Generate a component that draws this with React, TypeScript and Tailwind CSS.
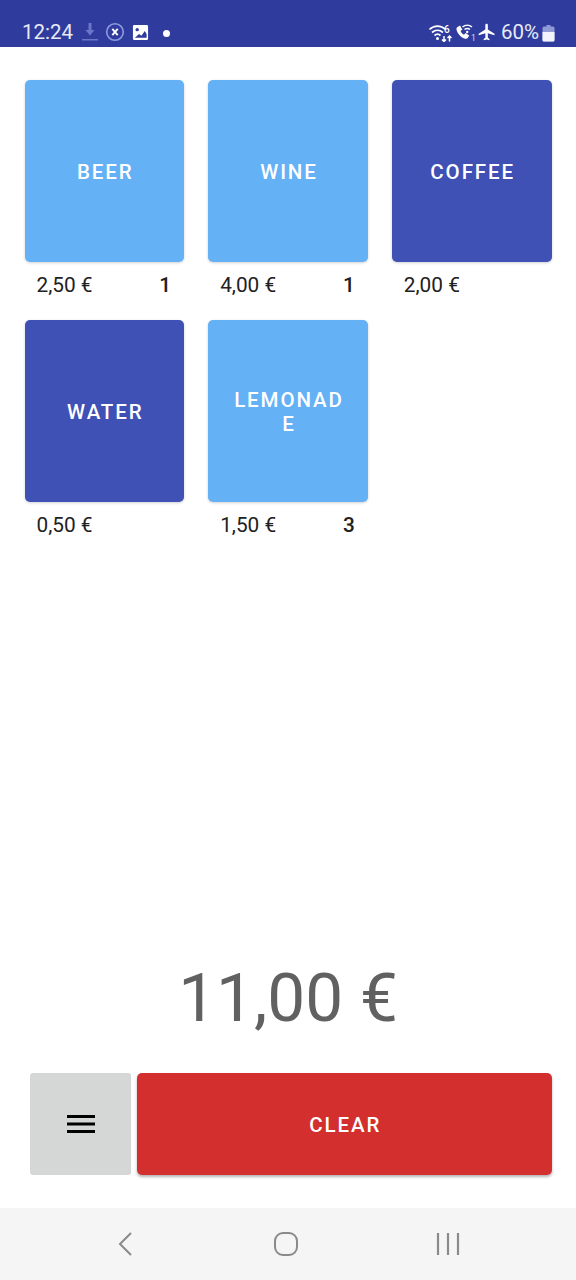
import React from "react";

type Product = { name: string; price: string; count?: number; dark?: boolean };

const products: Product[] = [
  { name: "BEER", price: "2,50 €", count: 1 },
  { name: "WINE", price: "4,00 €", count: 1 },
  { name: "COFFEE", price: "2,00 €", dark: true },
  { name: "WATER", price: "0,50 €", dark: true },
  { name: "LEMONADE", price: "1,50 €", count: 3 },
];

const StatusBar: React.FC = () => (
  <div className="h-[47px] bg-[#2f3c9e] flex items-end justify-between pb-[3px] pl-[22px] pr-[21px] text-[#e8eaf6]">
    <div className="flex items-center">
      <span className="text-[20.5px] leading-[24px] w-[52px]">12:24</span>
      <svg width="16" height="20" viewBox="0 0 16 20" className="ml-[8px] text-[#6a77c8]">
        <path d="M6.500 1h3v7h3l-4.500 5.500L3.500 8h3z" fill="currentColor" />
        <rect x="0" y="17" width="16" height="1.500" fill="currentColor" />
      </svg>
      <svg width="20" height="20" viewBox="0 0 20 20" className="ml-[7px]">
        <circle cx="10" cy="10" r="8.300" fill="none" stroke="#8f9ae0" strokeWidth="1.600" />
        <path d="M7.300 6.800l5.400 6.400M12.700 6.800l-5.400 6.400" stroke="#fff" strokeWidth="1.900" />
      </svg>
      <svg width="17" height="17" viewBox="0 0 18 18" className="ml-[7px]">
        <path
          d="M2.500 1h13A1.500 1.500 0 0 1 17 2.500v13a1.500 1.500 0 0 1-1.500 1.500h-13A1.500 1.500 0 0 1 1 15.500v-13A1.500 1.500 0 0 1 2.500 1z"
          fill="#fff"
        />
        <circle cx="5.500" cy="6" r="1.800" fill="#2f3c9e" />
        <path d="M3 14.500l4.500-4 2.500 2 3.500-5 2 3v4z" fill="#2f3c9e" />
      </svg>
      <div className="ml-[14px] mt-[2px] w-[7px] h-[7px] rounded-full bg-white" />
    </div>
    <div className="flex items-center">
      <svg width="24" height="20" viewBox="0 0 24 20" fill="none" stroke="#fff" strokeWidth="1.700">
        <path d="M.5 7.500C5 3 12 3 16.500 7.500" />
        <path d="M3 10.500c3.300-3 7.700-3 11 0" />
        <path d="M5.500 13.500c2-1.800 4-1.800 6 0" />
        <circle cx="8.500" cy="16.500" r="1.500" fill="#fff" stroke="none" />
        <path d="M15 14v5.500M13 17.500l2 2 2-2M20.500 19.500V14M18.500 16l2-2 2 2" strokeWidth="1.500" />
        <text x="15" y="11" fontSize="10" fontWeight="500" fill="#fff" stroke="none" fontFamily="Roboto, sans-serif">6</text>
      </svg>
      <svg width="20" height="20" viewBox="0 0 20 20" fill="none" className="ml-[2px]">
        <path
          d="M2.500 5l2.500-1.500 2.300 4-1.700 1.500c.7 1.700 1.800 2.900 3.400 3.700l1.500-1.600 3.700 2.500-1.500 2.400c-.5.700-1.400 1-2.400.7C6 15.500 2.500 12 1.500 7.500c-.2-1 .2-2 1-2.500z"
          fill="#fff"
        />
        <path d="M7.500 5c2.800-2.500 6.700-2.500 9.500 0M9.500 7.500c1.700-1.300 3.800-1.300 5.500 0" stroke="#fff" strokeWidth="1.500" />
        <circle cx="12.200" cy="10" r="1.200" fill="#fff" />
        <text x="16" y="18.500" fontSize="8.500" fill="#d5d9f2" fontFamily="Roboto, sans-serif">1</text>
      </svg>
      <svg width="20" height="20" viewBox="0 0 24 24" className="ml-[2px]">
        <path
          d="M21 16v-2l-8-5V3.500c0-.83-.67-1.500-1.500-1.500S10 2.670 10 3.500V9l-8 5v2l8-2.500V19l-2 1.500V22l3.500-1 3.500 1v-1.500L13 19v-5.500l8 2.500z"
          fill="#fff"
        />
      </svg>
      <span className="ml-[4px] text-[20.5px] leading-[24px]">60%</span>
      <svg width="13" height="18" viewBox="0 0 13 18" className="ml-[3px] mt-[2px]">
        <path d="M4.500 1h4v1.500h2.500A1.500 1.500 0 0 1 12.500 4v12A1.500 1.500 0 0 1 11 17.500H2A1.500 1.500 0 0 1 .5 16V4A1.500 1.500 0 0 1 2 2.500h2.500z" fill="#8f9ad6" />
        <path d="M.5 8h12v8a1.500 1.500 0 0 1-1.500 1.500H2A1.500 1.500 0 0 1 .5 16z" fill="#f3f4fb" />
      </svg>
    </div>
  </div>
);

const ProductCard: React.FC<{ product: Product }> = ({ product }) => (
  <div>
    <button
      className={`w-full h-[182px] rounded-[5px] flex items-center justify-center text-center text-white text-[20.5px] leading-[24px] font-medium tracking-[1.9px] pl-[22px] pr-[20px] pt-[2px] break-all shadow-[0_1px_3px_rgba(0,0,0,0.18)] ${
        product.dark ? "bg-[#3f51b5]" : "bg-[#64b1f6]"
      }`}
    >
      {product.name}
    </button>
    <div className="h-[48px] flex items-center justify-between pl-[12px] pr-[13px] text-[20.8px] text-[#212121]">
      <span>{product.price}</span>
      {product.count !== undefined && <span className="font-medium">{product.count}</span>}
    </div>
  </div>
);

export default function App() {
  return (
    <div className="w-[576px] h-[1280px] bg-white flex flex-col overflow-hidden font-['Roboto',sans-serif]">
      <StatusBar />

      <main className="flex-1 flex flex-col">
        <div className="grid grid-cols-3 gap-x-[24px] gap-y-[9.5px] pl-[24.5px] pr-[24.5px] pt-[33px]">
          {products.map((p) => (
            <ProductCard key={p.name} product={p} />
          ))}
        </div>

        <div className="mt-auto text-center text-[67.5px] leading-[80px] text-[#616161]">11,00 €</div>

        <div className="flex gap-[6px] pl-[30px] pr-[24.500px] mt-[35px] mb-[33px]">
          <button className="w-[101px] h-[102px] bg-[#d5d7d7] rounded-[3px] flex items-center justify-center">
            <svg width="28" height="18" viewBox="0 0 28 18" fill="#000">
              <rect width="28" height="3" y="0" />
              <rect width="28" height="3" y="7.500" />
              <rect width="28" height="3" y="15" />
            </svg>
          </button>
          <button className="flex-1 h-[102px] bg-[#d32f2f] rounded-[5px] text-white text-[20.5px] pt-[2px] pl-[2px] font-medium tracking-[1.9px] shadow-[0_2px_3px_rgba(0,0,0,0.3)]">
            CLEAR
          </button>
        </div>
      </main>

      <nav className="h-[72px] bg-[#f5f5f5] flex items-center pb-[1px] text-[#8a8a8a] relative">
        <div className="w-[576px] flex items-center">
          <svg width="16" height="26" viewBox="0 0 16 26" fill="none" stroke="currentColor" strokeWidth="2" className="ml-[117px]">
            <path d="M14 2L3 13l11 11" />
          </svg>
          <svg width="26" height="26" viewBox="0 0 26 26" fill="none" stroke="currentColor" strokeWidth="2" className="ml-[140px]">
            <rect x="2" y="2" width="22" height="22" rx="8" />
          </svg>
          <svg width="24" height="24" viewBox="0 0 24 24" fill="none" stroke="currentColor" strokeWidth="2.200" className="ml-[137px]">
            <path d="M2 1v22M12 1v22M22 1v22" />
          </svg>
        </div>
      </nav>
    </div>
  );
}
